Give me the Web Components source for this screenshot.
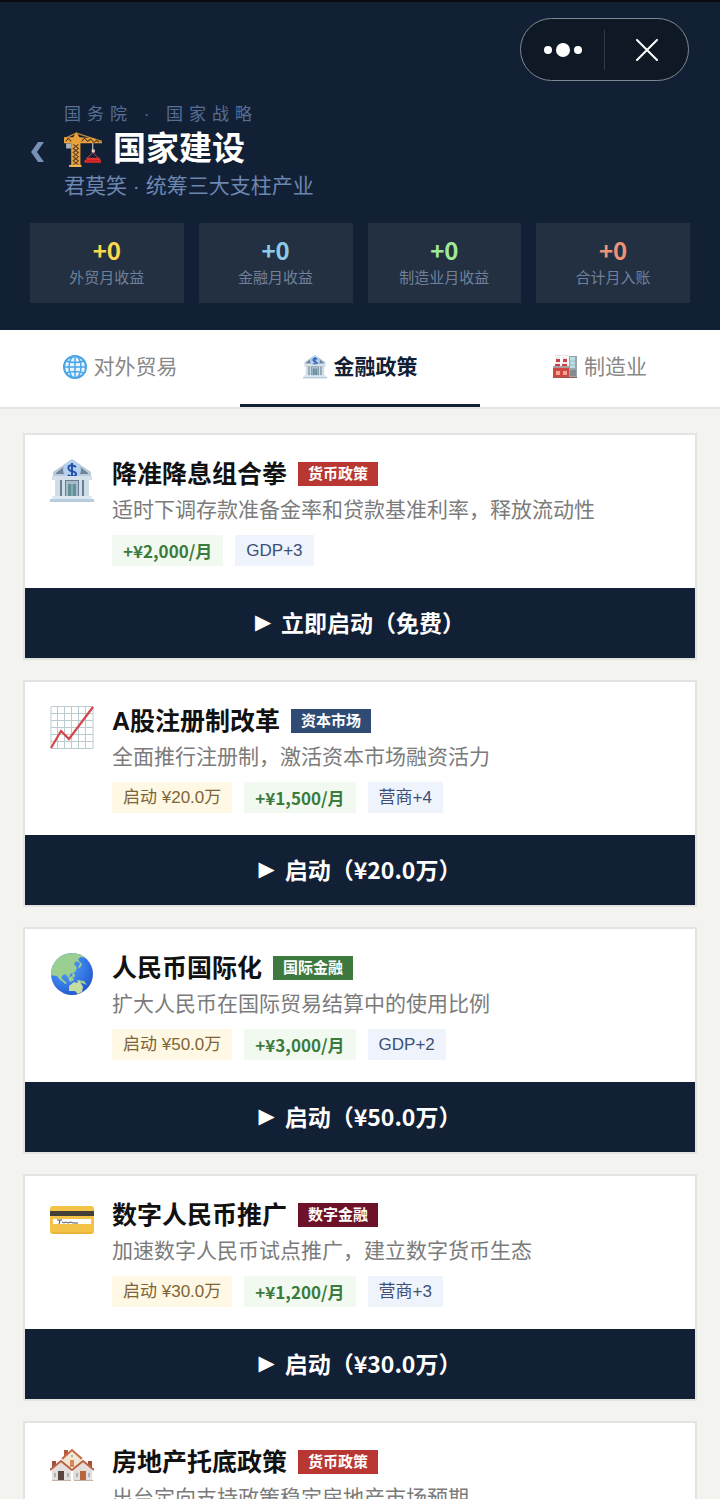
<!DOCTYPE html>
<html lang="zh-CN">
<head>
<meta charset="utf-8">
<meta name="viewport" content="width=device-width, initial-scale=1">
<title>国家建设</title>
<style>
    body {
        margin: 0;
        background-color: #f3f4ef;
        font-family: "Liberation Sans", "Noto Sans CJK SC", sans-serif;
    }
</style>
</head>
<body>

<build-app>
    <page-header slot="header">
        <span slot="eyebrow">国务院 · 国家战略</span>
        <span slot="title">国家建设</span>
        <span slot="subtitle">君莫笑 · 统筹三大支柱产业</span>
        <stat-tile value="+0" tone="gold">外贸月收益</stat-tile>
        <stat-tile value="+0" tone="sky">金融月收益</stat-tile>
        <stat-tile value="+0" tone="lime">制造业月收益</stat-tile>
        <stat-tile value="+0" tone="coral">合计月入账</stat-tile>
    </page-header>

    <tab-bar slot="tabs">
        <tab-item icon="globe">对外贸易</tab-item>
        <tab-item icon="bank" selected>金融政策</tab-item>
        <tab-item icon="factory">制造业</tab-item>
    </tab-bar>

    <policy-card icon="bank" label="货币政策" tone="red" action="立即启动（免费）">
        <span slot="name">降准降息组合拳</span>
        <span slot="text">适时下调存款准备金率和贷款基准利率，释放流动性</span>
        <tag-chip kind="income">+¥2,000/月</tag-chip>
        <tag-chip kind="effect">GDP+3</tag-chip>
    </policy-card>

    <policy-card icon="chart" label="资本市场" tone="navy" action="启动（¥20.0万）">
        <span slot="name">A股注册制改革</span>
        <span slot="text">全面推行注册制，激活资本市场融资活力</span>
        <tag-chip kind="cost">启动 ¥20.0万</tag-chip>
        <tag-chip kind="income">+¥1,500/月</tag-chip>
        <tag-chip kind="effect">营商+4</tag-chip>
    </policy-card>

    <policy-card icon="earth" label="国际金融" tone="green" action="启动（¥50.0万）">
        <span slot="name">人民币国际化</span>
        <span slot="text">扩大人民币在国际贸易结算中的使用比例</span>
        <tag-chip kind="cost">启动 ¥50.0万</tag-chip>
        <tag-chip kind="income">+¥3,000/月</tag-chip>
        <tag-chip kind="effect">GDP+2</tag-chip>
    </policy-card>

    <policy-card icon="card" label="数字金融" tone="wine" action="启动（¥30.0万）">
        <span slot="name">数字人民币推广</span>
        <span slot="text">加速数字人民币试点推广，建立数字货币生态</span>
        <tag-chip kind="cost">启动 ¥30.0万</tag-chip>
        <tag-chip kind="income">+¥1,200/月</tag-chip>
        <tag-chip kind="effect">营商+3</tag-chip>
    </policy-card>

    <policy-card icon="houses" label="货币政策" tone="red">
        <span slot="name">房地产托底政策</span>
        <span slot="text">出台定向支持政策稳定房地产市场预期</span>
    </policy-card>
</build-app>

<script>
const ICONS = {
    crane: `<svg viewBox="0 0 38 34">
        <path d="M2 11h5v5H2z" fill="#a9b0b8"/>
        <path d="M12 1 1 6M12 1l25 8" stroke="#c98a35" stroke-width="1.2" fill="none"/>
        <path d="M0 5h9l3-5 3 5 13 1 9 4v1H0z" fill="#e9a23b"/>
        <path d="M2 9l2-3 3 3M17 9l3-3 3 3 3-2 3 3 3-2 2 2" stroke="#513b28" stroke-width="1" fill="none"/>
        <path d="M7 10h9v24H7z" fill="#e9a23b"/>
        <path d="M9 12l5 4-5 4 5 4-5 4 5 4M14 12l-5 4 5 4-5 4 5 4-5 4" stroke="#513b28" stroke-width="1" fill="none"/>
        <path d="M5 32h12v2H5z" fill="#f0b95c"/>
        <path d="M28 11v7" stroke="#b7bec8" stroke-width="1.2"/>
        <path d="M27 17h3v3h-3z" fill="#f3d3c8"/>
        <path d="M28 20l-6 6M28 20l6 6" stroke="#d8564e" stroke-width=".8" fill="none"/>
        <path d="M22 25h13v2h1v3H20v-3h2z" fill="#e02e2a"/>
        <path d="M22 28h13" stroke="#a51f20" stroke-width=".8"/>
    </svg>`,
    globe: `<svg viewBox="0 0 24 24" fill="none" stroke="#4aa5e6" stroke-width="1.5">
        <circle cx="12" cy="12" r="11" fill="#e9f5fd" stroke-width="2"/>
        <ellipse cx="12" cy="12" rx="6" ry="11"/>
        <path d="M12 1v22M1 12h22M3 6q9 3 18 0M3 18q9-3 18 0"/>
    </svg>`,
    bank: `<svg viewBox="0 0 44 44">
        <path d="M22 0 41 13v4H3v-4z" fill="#b9cbdc"/>
        <path d="M6 14 15 7v8H6zM38 14l-9-7v8h9z" fill="#6f8496"/>
        <circle cx="22" cy="11" r="9" fill="#b4d0ef"/>
        <path d="M26 8q-4-3-7-1-2 3 2 5 6 1 5 4-3 3-8 0M22 4v15" fill="none" stroke="#2353a8" stroke-width="2"/>
        <path d="M2 17h40v4H2z" fill="#d5e1ea"/>
        <path d="M6 21h32v17H6z" fill="#6b8093"/>
        <path d="M5 21h5v17H5zM12 21h3v17h-3zM29 21h3v17h-3zM34 21h5v17h-5z" fill="#cfdde8"/>
        <path d="M16 22h12v16H16z" fill="#a9bcca"/>
        <path d="M18 25h8v13h-8z" fill="#668f9c"/>
        <path d="M22 25v13" stroke="#9cc5c9"/>
        <path d="M2 37h40v3H2z" fill="#dce7ef"/>
        <path d="M0 40h44v3H0z" fill="#b9ccdc"/>
    </svg>`,
    factory: `<svg viewBox="0 0 24 24">
        <path d="M3 2h4l1 12H2zM10 2h4l1 12H9z" fill="#f3e8e8"/>
        <path d="M3 4h4v3H3zM2 9h5v2H2zM10 4h4v3h-4zM9 9h5v2H9z" fill="#c9404c"/>
        <path d="M2 1q3-2 6 0M9 1q3-2 6 0" stroke="#d7d9dc" fill="none"/>
        <path d="M16 1h8v21h-8z" fill="#9aa4aa"/>
        <path d="M17 2h5v11h-5z" fill="#bfdde4"/>
        <path d="M17 6h5M17 10h5" stroke="#9fb9c2"/>
        <path d="M17 15h6v6h-6z" fill="#848c91"/>
        <path d="M0 12h16v11H0z" fill="#ce4a40"/>
        <path d="M0 11h16v2H0z" fill="#a8a0a2"/>
        <path d="M3 16h4v4H3zM10 16h4v4h-4z" fill="#f1a597"/>
        <path d="M0 22h24v1H0z" fill="#9b5552"/>
    </svg>`,
    chart: `<svg viewBox="0 0 44 44">
        <path d="M1 0h42v42H1z" fill="#fdfefe"/>
        <path d="M1 .5h42v42H1zM7.500 0v42M14.500 0v42M21.500 0v42M28.500 0v42M35.500 0v42M1 7.500h42M1 14.500h42M1 21.500h42M1 28.500h42M1 35.500h42" fill="none" stroke="#bccbd0"/>
        <path d="M1 42 11 25l8 8L43 1" fill="none" stroke="#d3464b" stroke-width="2.200"/>
    </svg>`,
    earth: `<svg viewBox="0 0 44 44">
        <defs>
            <radialGradient id="sea" cx=".35" cy=".3" r=".8">
                <stop offset="0" stop-color="#5aa3f1"/>
                <stop offset=".6" stop-color="#3478e5"/>
                <stop offset="1" stop-color="#1f4fc4"/>
            </radialGradient>
            <clipPath id="disc"><circle cx="22" cy="21" r="21"/></clipPath>
        </defs>
        <circle cx="22" cy="21" r="21" fill="url(#sea)"/>
        <g clip-path="url(#disc)" fill="#9bcf91">
            <path d="M1 10Q10 0 23 0q9 0 13 5l-5-1-3 2 2 4-4-2-2 3 3 4-2 4-5 2-1 4-4-4-3 2-1 5-4-5-7-1z"/>
            <path d="M29 8l3 3-2 4-2-1 2-3zM23 19l2 3-1 3-2-2zM10 24l7 6-2 1-5-5zM18 25l4-2 2 4-4 2zM26 27l8 1 3 4-8-3z"/>
            <path d="M19 33l5-4 3 1 2-3 4 7-1 5-4 2-3-3-6 0z" fill="#c6dda1"/>
            <path d="M36 37l3-3-2 5z"/>
        </g>
    </svg>`,
    card: `<svg viewBox="0 0 44 44">
        <rect y="6" width="44" height="28" rx="3" fill="#f4c247"/>
        <path d="M0 11h44v5H0z" fill="#423f37"/>
        <path d="M3 19h38v5H3z" fill="#fff"/>
        <path d="M7 20h5M10 20l-1 4M12 22l2 1 2-1 2 1 3-1 2 1 5 0" fill="none" stroke="#4e5358"/>
        <path d="M2 33h40" stroke="#e0a92e"/>
    </svg>`,
    houses: `<svg viewBox="0 0 44 44">
        <path d="M14 3h4v6h-4z" fill="#b65c3d"/>
        <path d="M13 11 22 4l9 7v9H13z" fill="#f1e6d1"/>
        <path d="M12 12 22 3l10 9" fill="none" stroke="#c76b48" stroke-width="2"/>
        <path d="M20 13h4v7h-4z" fill="#d88858"/>
        <circle cx="22" cy="9" r="1" fill="#77a996"/>
        <path d="M2 14h4v6H2zM38 14h4v6h-4z" fill="#a44f39"/>
        <path d="M2 21l9-7 10 7v12H2zM23 21l10-7 9 7v12H23z" fill="#e4dfdc"/>
        <path d="M0 23 11 14l11 9 11-9 11 9" fill="none" stroke="#bb6245" stroke-width="2"/>
        <path d="M8 24h6v9H8z" fill="#58463f"/>
        <path d="M30 24h6v9h-6z" fill="#b8653f"/>
        <path d="M4 26h2v4H4zM17 26h2v4h-2zM26 26h2v4h-2zM38 26h2v4h-2z" fill="#a8b4ba"/>
        <path d="M2 33h19v1H2zM24 33h19v1H24z" fill="#c2b2a7"/>
    </svg>`,
    back: `<svg viewBox="0 0 14 22"><path d="M8 1h6L7 11l7 10H8L1 11z" fill="#7790b6"/></svg>`,
    more: `<svg viewBox="0 0 40 16" fill="#fff">
        <circle cx="5" cy="8" r="4"/><circle cx="20" cy="8" r="7"/><circle cx="35" cy="8" r="4"/>
    </svg>`,
    close: `<svg viewBox="0 0 22 22"><path d="M1 1l20 20M21 1 1 21" stroke="#fff" stroke-width="2" stroke-linecap="round"/></svg>`
};

class BaseElement extends HTMLElement {
    constructor() {
        super();
        this.attachShadow({mode: 'open'});
    }

    render(html) {
        const template = document.createElement('template');
        template.innerHTML = html;
        this.shadowRoot.replaceChildren(template.content.cloneNode(true));
    }
}

class AppIcon extends BaseElement {
    connectedCallback() {
        this.setAttribute('aria-hidden', 'true');
        this.render(`
            <style>
                :host { display: block; flex: none; }
                svg { display: block; width: 100%; height: 100%; }
            </style>
            ${ICONS[this.getAttribute('name')] || ''}
        `);
    }
}

class CapsuleMenu extends BaseElement {
    connectedCallback() {
        this.render(`
            <style>
                :host {
                    display: flex;
                    align-items: center;
                    box-sizing: border-box;
                    width: 169px;
                    height: 63px;
                    border: 1px solid #7f8893;
                    border-radius: 32px;
                    background-color: #0e1925;
                }
                button {
                    flex: 1;
                    display: flex;
                    align-items: center;
                    justify-content: center;
                    height: 40px;
                    padding: 0;
                    border: 0;
                    background: none;
                    cursor: pointer;
                }
                button + button { border-left: 1px solid #303b48; }
                .more { width: 40px; height: 16px; }
                .close { width: 22px; height: 22px; }
            </style>
            <button type="button" aria-label="更多"><app-icon class="more" name="more"></app-icon></button>
            <button type="button" aria-label="关闭"><app-icon class="close" name="close"></app-icon></button>
        `);
    }
}

class PageHeader extends BaseElement {
    connectedCallback() {
        this.render(`
            <style>
                :host {
                    display: block;
                    padding: 16px 30px 27px;
                    border-top: 2px solid #0a0b0e;
                    background-color: #122036;
                }
                capsule-menu { margin: 0 1px 22px auto; }
                .heading {
                    display: flex;
                    align-items: center;
                    gap: 20px;
                    margin-bottom: 22px;
                }
                .back {
                    padding: 0;
                    border: 0;
                    background: none;
                    cursor: pointer;
                }
                .back app-icon { width: 14px; height: 22px; }
                .eyebrow {
                    color: #566f93;
                    font-size: 17px;
                    line-height: 24px;
                    letter-spacing: 6px;
                }
                h1 {
                    display: flex;
                    align-items: center;
                    gap: 10px;
                    margin: 0;
                    color: #fff;
                    font-size: 33px;
                    line-height: 44px;
                }
                h1 app-icon { width: 39px; height: 35px; }
                .subtitle {
                    color: #6c87b0;
                    font-size: 21px;
                    line-height: 30px;
                }
                .stats {
                    display: grid;
                    grid-template-columns: repeat(4, 1fr);
                    gap: 15px;
                }
            </style>
            <capsule-menu></capsule-menu>
            <div class="heading">
                <button class="back" type="button" aria-label="返回"><app-icon name="back"></app-icon></button>
                <div>
                    <div class="eyebrow"><slot name="eyebrow"></slot></div>
                    <h1><app-icon name="crane"></app-icon><slot name="title"></slot></h1>
                    <div class="subtitle"><slot name="subtitle"></slot></div>
                </div>
            </div>
            <div class="stats"><slot></slot></div>
        `);
    }
}

class StatTile extends BaseElement {
    connectedCallback() {
        this.render(`
            <style>
                :host {
                    display: block;
                    padding: 11px 0 14px;
                    background-color: #223042;
                    color: #70809c;
                    font-size: 15px;
                    line-height: 23px;
                    text-align: center;
                }
                .value {
                    display: block;
                    font-family: "Noto Sans CJK SC", sans-serif;
                    font-size: 24px;
                    line-height: 32px;
                }
                :host([tone="gold"]) .value { color: #fbd94b; }
                :host([tone="sky"]) .value { color: #8bcbe8; }
                :host([tone="lime"]) .value { color: #a0e896; }
                :host([tone="coral"]) .value { color: #ee9277; }
            </style>
            <strong class="value">${this.getAttribute('value')}</strong>
            <slot></slot>
        `);
    }
}

class TabBar extends BaseElement {
    connectedCallback() {
        this.render(`
            <style>
                :host {
                    display: flex;
                    border-bottom: 2px solid #e5e6e3;
                    background-color: #fff;
                }
            </style>
            <slot></slot>
        `);
        this.addEventListener('click', this._onClick.bind(this));
    }

    _onClick(e) {
        const tab = e.target.closest('tab-item');
        if (!tab) return;
        this.querySelectorAll('tab-item').forEach((item) => {
            item.toggleAttribute('selected', item === tab);
        });
    }
}

class TabItem extends BaseElement {
    static observedAttributes = ['selected'];

    connectedCallback() {
        this.render(`
            <style>
                :host { display: block; flex: 1; }
                button {
                    display: flex;
                    align-items: center;
                    justify-content: center;
                    gap: 7px;
                    box-sizing: border-box;
                    width: 100%;
                    height: 77px;
                    padding: 0;
                    border: 0;
                    border-bottom: 3px solid transparent;
                    background: none;
                    color: #888;
                    font: inherit;
                    font-size: 21px;
                    line-height: 30px;
                    cursor: pointer;
                }
                :host([selected]) button {
                    border-bottom-color: #122036;
                    color: #122036;
                    font-weight: bold;
                }
                app-icon { width: 24px; height: 24px; }
            </style>
            <button type="button">
                <app-icon name="${this.getAttribute('icon')}"></app-icon>
                <slot></slot>
            </button>
        `);
        this.attributeChangedCallback();
    }

    attributeChangedCallback() {
        const button = this.shadowRoot.querySelector('button');
        if (button) button.setAttribute('aria-pressed', this.hasAttribute('selected'));
    }
}

class TagChip extends BaseElement {
    connectedCallback() {
        this.render(`
            <style>
                :host {
                    display: block;
                    padding: 0 11px;
                    font-size: 17px;
                    line-height: 31px;
                    white-space: nowrap;
                }
                :host([kind="cost"]) { background-color: #fff8e5; color: #7d6535; }
                :host([kind="income"]) {
                    background-color: #f1f9f1;
                    color: #3b7b3d;
                    font-family: "Noto Sans CJK SC", sans-serif;
                    font-weight: bold;
                }
                :host([kind="effect"]) { background-color: #eff3fb; color: #3b5078; }
            </style>
            <slot></slot>
        `);
    }
}

class PolicyCard extends BaseElement {
    connectedCallback() {
        const action = this.getAttribute('action');
        this.render(`
            <style>
                :host {
                    display: block;
                    flex: none;
                    border: 2px solid #e3e4e1;
                    background-color: #fff;
                }
                .body {
                    display: flex;
                    gap: 18px;
                    padding: 24px 25px 22px;
                }
                .body > app-icon { width: 44px; height: 44px; }
                .info { flex: 1; min-width: 0; }
                .head {
                    display: flex;
                    align-items: center;
                    gap: 11px;
                }
                h2 {
                    margin: 0;
                    color: #111;
                    font-size: 25px;
                    line-height: 30px;
                }
                .label {
                    padding: 0 10px;
                    color: #fff;
                    font-size: 15px;
                    font-weight: bold;
                    line-height: 24px;
                }
                :host([tone="red"]) .label { background-color: #b83733; }
                :host([tone="navy"]) .label { background-color: #304b74; }
                :host([tone="green"]) .label { background-color: #3e7a40; }
                :host([tone="wine"]) .label { background-color: #6d1229; }
                p {
                    margin: 6px 0 10px;
                    color: #7b7b7b;
                    font-size: 21px;
                    line-height: 30px;
                }
                .chips {
                    display: flex;
                    flex-wrap: wrap;
                    gap: 12px;
                }
                button {
                    display: flex;
                    align-items: center;
                    justify-content: center;
                    gap: 10px;
                    width: 100%;
                    height: 70px;
                    padding: 0 0 2px;
                    border: 0;
                    background-color: #122036;
                    color: #fff;
                    font-family: "Noto Sans CJK SC", sans-serif;
                    font-size: 23px;
                    font-weight: bold;
                    cursor: pointer;
                }
                .play {
                    font-family: "DejaVu Sans", sans-serif;
                    font-size: 21px;
                    font-weight: normal;
                }
            </style>
            <div class="body">
                <app-icon name="${this.getAttribute('icon')}"></app-icon>
                <div class="info">
                    <div class="head">
                        <h2><slot name="name"></slot></h2>
                        <span class="label">${this.getAttribute('label')}</span>
                    </div>
                    <p><slot name="text"></slot></p>
                    <div class="chips"><slot></slot></div>
                </div>
            </div>
            ${action ? `<button type="button"><span class="play">▶</span><span>${action}</span></button>` : ''}
        `);
    }
}

class BuildApp extends BaseElement {
    connectedCallback() {
        this.render(`
            <style>
                :host {
                    display: flex;
                    flex-direction: column;
                    height: 100vh;
                }
                header, nav { flex: none; }
                main {
                    flex: 1;
                    display: flex;
                    flex-direction: column;
                    gap: 20px;
                    min-height: 0;
                    padding: 24px 23px;
                    overflow-y: auto;
                    scrollbar-width: none;
                }
            </style>
            <header><slot name="header"></slot></header>
            <nav><slot name="tabs"></slot></nav>
            <main><slot></slot></main>
        `);
    }
}

customElements.define('app-icon', AppIcon);
customElements.define('capsule-menu', CapsuleMenu);
customElements.define('page-header', PageHeader);
customElements.define('stat-tile', StatTile);
customElements.define('tab-bar', TabBar);
customElements.define('tab-item', TabItem);
customElements.define('tag-chip', TagChip);
customElements.define('policy-card', PolicyCard);
customElements.define('build-app', BuildApp);
</script>
</body>
</html>
